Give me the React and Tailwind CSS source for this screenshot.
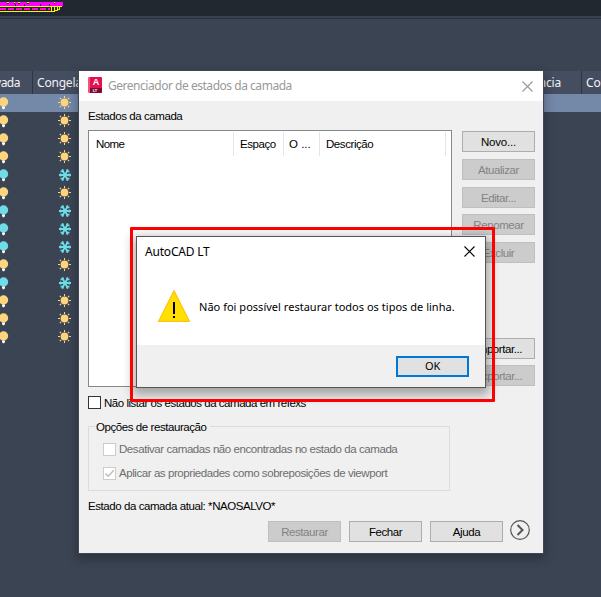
import React from 'react';

const rows = ['sun', 'sun', 'sun', 'sun', 'snow', 'sun', 'snow', 'snow', 'snow', 'sun', 'snow', 'sun', 'sun', 'sun'];

function Bulb({ on }) {
  return (
    <svg width="9" height="18" viewBox="0 0 9 18" className="block shrink-0">
      <circle cx="3.5" cy="8" r="4.7" fill={on ? '#ffd47e' : '#6fdce8'} />
      <path d="M2 12.500h3v2H4.300v.8H2.700v-.8H2z" fill="#fff" />
    </svg>
  );
}

function Sun() {
  return (
    <svg width="13" height="18" viewBox="0 0 13 18" className="block shrink-0">
      <circle cx="6.5" cy="8.5" r="3.9" fill="#ffd47e" />
      <path d="M6.500 2v2M6.500 13v2M0 8.500h2M11 8.500h2" stroke="#ffd47e" strokeWidth="1" />
      <path d="M1.800 3.800l1.200 1.200M11.200 3.800L10 5M1.800 13.200L3 12M11.200 13.200L10 12" stroke="#ffd47e" strokeWidth="1.100" />
    </svg>
  );
}

function Snow() {
  return (
    <svg width="13" height="18" viewBox="0 0 13 18" className="block shrink-0">
      <g stroke="#6fdce8" fill="none">
        <path d="M1 9h12M4 3.500l6 11M10 3.500l-6 11" strokeWidth="1.8" />
        <path d="M2.500 7.500v3M11.500 7.500v3M2.500 5.500H5V3.500M11.500 5.500H9V3.500M2.500 12.500H5v2M11.500 12.500H9v2" strokeWidth="1.400" />
      </g>
    </svg>
  );
}

function Drawing() {
  return (
    <svg width="70" height="15" viewBox="0 0 70 15" className="block" shapeRendering="crispEdges">
      <path d="M0 2.500h62M0 6.500h62" stroke="#f4f400" fill="none" />
      <path d="M0 11.500h55M55 10.500h3M58 9.500h1M59.500 7v3" stroke="#f4f400" fill="none" />
      <path d="M0 3h62" stroke="#ff00ff" strokeWidth="2" strokeDasharray="7 2 5 1 3 2" />
      <path d="M0 5h63M30 3h33" stroke="#ff00ff" strokeWidth="2" strokeDasharray="15 1 8 1" />
      <path d="M0 9h50" stroke="#ff00ff" strokeWidth="2" strokeDasharray="6 2" />
      <path d="M51.500 7v4M54.500 7v4M57.500 7v3" stroke="#f4f400" fill="none" />
    </svg>
  );
}

function Palette() {
  return (
    <div className="w-full h-full bg-[#3b4453]">
      <div className="h-[16px] bg-[#212830]">
        <Drawing />
      </div>
      <div className="h-[3px] border-b border-[#2b323e] bg-[#39414f]" />
      <div className="h-[52px]" />
      <div className="flex h-[23px] bg-[#454e61] text-[12px] leading-[24px] tracking-[-0.2px] text-[#f2f3f5] font-['Noto_Sans',sans-serif] overflow-hidden">
        <div className="w-[33px] shrink-0 border-r border-[#2f3643] flex justify-end pr-[12px] tracking-[-0.5px]">
          <span>vada</span>
        </div>
        <div className="w-[497px] shrink-0 pl-[4px]">Congelada</div>
        <div className="w-[52px] shrink-0 border-r border-[#2f3643] flex justify-end pr-[20px]">
          <span>ncia</span>
        </div>
        <div className="pl-[4px]">Cor</div>
      </div>
      {rows.map((kind, i) => (
        <div key={i} className={`flex h-[18px] ${i === 0 ? 'bg-[#7488a8]' : ''}`}>
          <Bulb on={kind === 'sun'} />
          <div className="w-[49px] shrink-0" />
          {kind === 'sun' ? <Sun /> : <Snow />}
        </div>
      ))}
    </div>
  );
}

function Button({ children, disabled, className = '' }) {
  const look = disabled ? 'bg-[#cccccc] border-[#bfbfbf] text-[#838383]' : 'bg-[#e1e1e1] border-[#adadad] text-black';
  return (
    <button className={`flex items-center justify-center w-[73px] h-[21px] shrink-0 border whitespace-nowrap ${look} ${className}`}>
      {children}
    </button>
  );
}

function Cross({ color, size }) {
  return (
    <svg width={size} height={size} viewBox="0 0 11 11" className="block">
      <path d="M.5.5l10 10M10.500.5l-10 10" stroke={color} strokeWidth="1.1" />
    </svg>
  );
}

function AppIcon() {
  return (
    <div className="flex flex-col w-[14px] h-[16px] -mt-[2px] bg-[#e5104f] rounded-[1px] border-l-2 border-[#f0557f] text-white text-center tracking-normal font-['Liberation_Sans',sans-serif] font-bold overflow-hidden">
      <span className="text-[9px] leading-[11px] h-[11px]">A</span>
      <span className="text-[4px] leading-[5px] h-[5px] bg-[#7c0a31] -ml-[2px]">LT</span>
    </div>
  );
}

function Check({ checked, disabled }) {
  return (
    <div className={`flex items-center justify-center w-[13px] h-[13px] shrink-0 border bg-white ${disabled ? 'border-[#cccccc]' : 'border-[#333333]'}`}>
      {checked && (
        <svg width="11" height="11" viewBox="0 0 11 11">
          <path d="M1.500 5.500l2.700 2.800L9.800 2.200" fill="none" stroke="#bcbcbc" strokeWidth="1.3" />
        </svg>
      )}
    </div>
  );
}

function Manager() {
  return (
    <div className="w-[464px] h-[482px] flex flex-col bg-[#f0f0f0] shadow-[0_0_0_1px_#424756,0_4px_10px_2px_rgba(0,0,0,0.28)] text-[11.5px] leading-[14px] text-black font-['Liberation_Sans',sans-serif] tracking-[-0.43px]">
      <div className="flex items-center h-[30px] bg-white pl-[9px] pr-[10px] shrink-0">
        <AppIcon />
        <span className="ml-[6px] flex-1 text-[12px] tracking-[-0.47px] text-[#999999] font-['Noto_Sans',sans-serif]">
          Gerenciador de estados da camada
        </span>
        <Cross color="#999999" size={11} />
      </div>
      <div className="pl-[9px] pt-[8px] h-[29px] shrink-0">Estados da camada</div>
      <div className="flex pl-[9px] shrink-0">
        <div className="w-[364px] h-[257px] border border-[#828790] bg-white pt-[1px]">
          <div className="flex h-[24px]">
            <div className="w-[145px] h-full border-r border-[#e5e5e5] pl-[7px] pt-[5px] tracking-[-0.6px]">Nome</div>
            <div className="w-[50px] h-full border-r border-[#e5e5e5] pl-[6px] pt-[5px]">Espaço</div>
            <div className="w-[36px] h-full border-r border-[#e5e5e5] pl-[5px] pt-[5px] tracking-[0px]">O ...</div>
            <div className="w-[126px] h-full border-r border-[#e5e5e5] pl-[6px] pt-[5px]">Descrição</div>
          </div>
        </div>
        <div className="flex flex-col ml-[10px] pt-[1px]">
          <Button className="tracking-[-0.200px]">Novo...</Button>
          <Button disabled className="mt-[7px]">Atualizar</Button>
          <Button disabled className="mt-[7px]">Editar...</Button>
          <Button disabled className="mt-[6px]">Renomear</Button>
          <Button disabled className="mt-[7px]">Excluir</Button>
          <Button className="mt-[75px]">Importar...</Button>
          <Button disabled className="mt-[6px]">Exportar...</Button>
        </div>
      </div>
      <div className="flex items-center gap-[3px] pl-[9px] mt-[8px] h-[15px] shrink-0">
        <Check />
        <span className="tracking-[-0.47px]">Não listar os estados da camada em refexs</span>
      </div>
      <div className="ml-[9px] mt-[16px] w-[362px] h-[65px] border border-[#dcdcdc] shrink-0">
        <div className="-mt-[7px] ml-[6px] w-[115px] h-[14px] bg-[#f0f0f0] pl-[1px] whitespace-nowrap">Opções de restauração</div>
        <div className="flex items-center gap-[3px] ml-[14px] mt-[8px] h-[14px] text-[#6d6d6d]">
          <Check disabled />
          <span>Desativar camadas não encontradas no estado da camada</span>
        </div>
        <div className="flex items-center gap-[3px] ml-[14px] mt-[10px] h-[14px] text-[#6d6d6d]">
          <Check disabled checked />
          <span>Aplicar as propriedades como sobreposições de viewport</span>
        </div>
      </div>
      <div className="pl-[9px] mt-[8px] h-[14px] shrink-0">Estado da camada atual: *NAOSALVO*</div>
      <div className="flex pl-[189px] mt-[8px] gap-[8px]">
        <Button disabled>Restaurar</Button>
        <Button>Fechar</Button>
        <Button>Ajuda</Button>
        <svg width="20" height="20" viewBox="0 0 20 20" className="-ml-[1px] -mt-[1px]">
          <circle cx="10" cy="10" r="9.300" fill="none" stroke="#555" strokeWidth="1.200" />
          <path d="M7.500 5l5 5-5 5" fill="none" stroke="#555" strokeWidth="2" />
        </svg>
      </div>
    </div>
  );
}

function Message() {
  return (
    <div className="w-[350px] h-[152px] flex flex-col border border-[#555] bg-white shadow-[0_4px_10px_3px_rgba(0,0,0,0.32)] font-['Noto_Sans',sans-serif] text-[12px] text-black">
      <div className="flex items-center h-[29px] pl-[8px] pr-[10px] shrink-0">
        <span className="flex-1 tracking-[-0.2px]">AutoCAD LT</span>
        <Cross color="#000" size={11} />
      </div>
      <div className="flex items-center h-[79px] pl-[21px] shrink-0">
        <svg width="32" height="32" viewBox="0 0 32 32" className="block mt-[1px] shrink-0">
          <path d="M16 .8L31.300 31.300H.7z" fill="#ffe000" stroke="#ffc20e" strokeWidth="1.200" />
          <path d="M16 12v12M16 26v2" stroke="#000" strokeWidth="2" />
        </svg>
        <span className="ml-[9px] mt-[3px] whitespace-nowrap text-[11px] tracking-[0.02px]">Não foi possível restaurar todos os tipos de linha.</span>
      </div>
      <div className="flex items-center justify-end flex-1 bg-[#f0f0f0] pr-[16px]">
        <button className="flex items-center justify-center w-[73px] h-[21px] pt-[1px] border-2 border-[#0078d7] bg-[#e1e1e1] text-[11px] tracking-[-0.2px]">OK</button>
      </div>
    </div>
  );
}

export default function App() {
  return (
    <div className="relative w-[601px] h-[597px] overflow-hidden">
      <Palette />
      <div className="absolute left-[79px] top-[71px]">
        <Manager />
      </div>
      <div className="absolute left-[136px] top-[236px]">
        <Message />
      </div>
      <div className="absolute left-[130px] top-[227px] w-[365px] h-[175px] border-[3px] border-[#ff0000] rounded-[1px]" />
    </div>
  );
}
